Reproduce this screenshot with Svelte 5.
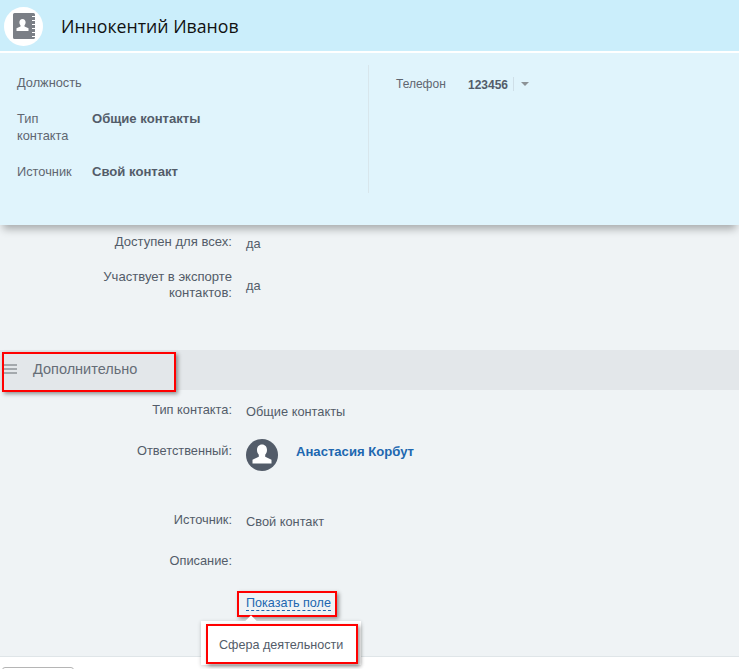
<script>
    const topLeft = [
        { label: 'Должность', value: '', cls: 'r1' },
        { label: 'Тип контакта', value: 'Общие контакты', cls: 'r2' },
        { label: 'Источник', value: 'Свой контакт', cls: 'r3' }
    ];
</script>

<div class="page">
    <header class="head">
        <div class="logo">
            <svg width="22" height="26" viewBox="0 0 22 26">
                <path fill="#7b7f86" d="M1.500 0h19a1.500 1.500 0 0 1 1.500 1.500v23a1.500 1.500 0 0 1-1.500 1.500h-19A1.500 1.500 0 0 1 0 24.500v-23A1.500 1.500 0 0 1 1.500 0z"/>
                <path fill="#fff" d="M9.500 6c1.900 0 3.100 1.400 3.100 3.300 0 1.200-.5 2.300-1.100 3v1.100l4 1.900v2.700H3.500v-2.700l4-1.900v-1.100c-.6-.7-1.100-1.800-1.100-3C6.400 7.400 7.600 6 9.500 6z"/>
                <path stroke="#fff" stroke-width="1" d="M19 3.500h3M19 7.500h3M19 11.500h3M19 15.500h3M19 19.500h3M19 23.500h3"/>
            </svg>
        </div>
        <h1>Иннокентий Иванов</h1>
    </header>

    <section class="card">
        <div class="col left">
            {#each topLeft as row}
                <div class="info {row.cls}">
                    <span class="k">{row.label}</span>
                    <span class="v">{row.value}</span>
                </div>
            {/each}
        </div>
        <div class="col right">
            <span class="k phone-k">Телефон</span>
            <span class="v phone">123456</span>
            <span class="caret"></span>
        </div>
    </section>

    <main class="details">
        <div class="row first"><span class="lbl">Доступен для всех:</span><span class="val">да</span></div>
        <div class="row export"><span class="lbl">Участвует в экспорте контактов:</span><span class="val">да</span></div>

        <div class="bar">
            <div class="mark title">
                <span class="burger"><i></i><i></i><i></i></span>
                <span>Дополнительно</span>
            </div>
        </div>

        <div class="row type"><span class="lbl">Тип контакта:</span><span class="val">Общие контакты</span></div>
        <div class="row owner">
            <span class="lbl">Ответственный:</span>
            <span class="val person">
                <svg class="ava" width="32" height="32" viewBox="0 0 32 32">
                    <circle cx="16" cy="16" r="16" fill="#535c69"/>
                    <path fill="#fff" d="M16 5.500c3.100 0 5 2.300 5 5.400 0 2-.8 3.700-1.800 4.800v2l6.300 3v3.800H6.500v-3.800l6.300-3v-2c-1-1.100-1.800-2.800-1.800-4.800 0-3.100 1.900-5.400 5-5.400z"/>
                </svg>
                <a href="#owner">Анастасия Корбут</a>
            </span>
        </div>
        <div class="row source"><span class="lbl">Источник:</span><span class="val">Свой контакт</span></div>
        <div class="row desc"><span class="lbl">Описание:</span><span class="val"></span></div>
        <div class="row show">
            <span class="lbl"></span>
            <span class="val"><span class="mark link-box"><a class="dashed" href="#field">Показать поле</a></span></span>
        </div>

        <div class="popup">
            <div class="mark item">Сфера деятельности</div>
        </div>
    </main>

    <footer class="foot"><span class="btn"></span></footer>
</div>

<style>
    :global(body) {
        margin: 0;
        background: #eff3f5;
    }

    .page {
        width: 739px;
        height: 669px;
        overflow: hidden;
        display: flex;
        flex-direction: column;
        font-family: "Liberation Sans", Arial, sans-serif;
        font-size: 12.8px;
        color: #535c69;
    }

    .head {
        height: 51px;
        flex: none;
        background: #cbeefb;
        display: flex;
        align-items: center;
        padding-left: 4px;
        box-sizing: border-box;
        position: relative;
        z-index: 2;
    }

    .logo {
        width: 39px;
        height: 39px;
        border-radius: 50%;
        background: #fff;
        display: flex;
        align-items: center;
        justify-content: center;
        margin-top: 1px;
    }

    h1 {
        margin: 0 0 0 18px;
        font: 400 17.7px "Open Sans", sans-serif;
        color: #111;
    }

    .card {
        flex: none;
        height: 174px;
        border-top: 2px solid #fff;
        background: #e0f4fc;
        display: flex;
        box-sizing: border-box;
        padding-top: 12px;
        position: relative;
        z-index: 1;
        box-shadow: 0 7px 8px -3px rgba(0, 0, 0, 0.3);
    }

    .col {
        height: 128px;
    }

    .left {
        width: 369px;
        box-sizing: border-box;
        border-right: 1px solid #d8e6ec;
        padding: 9px 0 0 17px;
    }

    .info {
        display: grid;
        grid-template-columns: 60px 1fr;
        column-gap: 15px;
        line-height: 17px;
    }

    .r1 { height: 36px; }
    .r2 { height: 53px; }

    .k {
        color: #5f6670;
    }

    .v {
        font-weight: 700;
        font-size: 13.1px;
        color: #535c69;
    }

    .right {
        flex: 1;
        display: flex;
        align-items: flex-start;
        padding: 11px 0 0 27px;
        line-height: 16px;
    }

    .phone-k {
        width: 72px;
        font-size: 12px;
    }

    .phone {
        font-size: 12px;
        padding-right: 5px;
        border-right: 1px solid #cfdfe8;
        height: 14px;
        line-height: 16px;
        margin-top: 1px;
    }

    .caret {
        width: 0;
        height: 0;
        margin: 6px 0 0 7px;
        border: 4px solid transparent;
        border-top-color: #8c9296;
        border-bottom: 0;
    }

    .details {
        flex: 1;
        position: relative;
        padding-top: 9px;
    }

    .row {
        display: grid;
        grid-template-columns: 232px 1fr;
        column-gap: 14px;
        line-height: 16px;
    }

    .lbl {
        text-align: right;
    }

    .val {
        padding-top: 2px;
    }

    .first { height: 35px; }

    .first .lbl,
    .export .lbl {
        font-size: 13.1px;
    }

    .export {
        height: 81px;
        align-items: start;
    }

    .export .lbl {
        padding-left: 96px;
    }

    .export .val {
        padding-top: 9px;
    }

    .mark {
        border: 2px solid #f00;
        box-shadow: 2px 2px 4px rgba(0, 0, 0, 0.4);
        box-sizing: border-box;
    }

    .bar {
        height: 40px;
        background: #e3e7ea;
        padding: 2px 0 0 2px;
        box-sizing: border-box;
        margin-bottom: 12px;
    }

    .title {
        width: 174px;
        height: 40px;
        padding-bottom: 6px;
        display: flex;
        align-items: center;
        font-size: 14.5px;
        color: #666d77;
        gap: 16px;
        background: #e3e7ea;
    }

    .burger {
        display: flex;
        flex-direction: column;
        gap: 2px;
        width: 13px;
    }

    .burger i {
        height: 2px;
        background: #a4a9ad;
    }

    .type { height: 41px; }
    .owner { height: 69px; }

    .person {
        display: flex;
        align-items: flex-start;
        gap: 18px;
        margin-top: -4px;
        padding: 0;
    }

    .person a {
        font-weight: 700;
        font-size: 13.1px;
        color: #2067b0;
        text-decoration: none;
        margin-top: 5px;
    }

    .source { height: 41px; }
    .desc { height: 36px; }

    .link-box {
        display: inline-block;
        margin-left: -9px;
        padding: 2px 4px 0 7px;
        height: 26px;
        background: #eff3f5;
    }

    .dashed {
        color: #2067b0;
        font-size: 12.6px;
        text-decoration: none;
        border-bottom: 1px dashed #2067b0;
    }

    .popup {
        position: absolute;
        left: 201px;
        top: 396px;
        width: 160px;
        height: 44px;
        background: #fff;
        box-shadow: 0 1px 4px rgba(0, 0, 0, 0.2);
        padding: 3px 3px 1px 5px;
        box-sizing: border-box;
        z-index: 2;
    }

    .popup::before {
        content: "";
        position: absolute;
        left: 46px;
        top: -4px;
        width: 8px;
        height: 8px;
        background: #fff;
        transform: rotate(45deg);
    }

    .item {
        position: relative;
        height: 40px;
        line-height: 38px;
        padding-left: 11px;
        font-size: 12.6px;
        background: #fff;
    }

    .foot {
        height: 13px;
        flex: none;
        background: #fff;
        border-top: 1px solid #dfe5e8;
        box-sizing: border-box;
    }

    .btn {
        display: block;
        width: 70px;
        height: 10px;
        margin: 10px 0 0 2px;
        border: 1px solid #b5b5b5;
        border-radius: 3px;
    }
</style>
